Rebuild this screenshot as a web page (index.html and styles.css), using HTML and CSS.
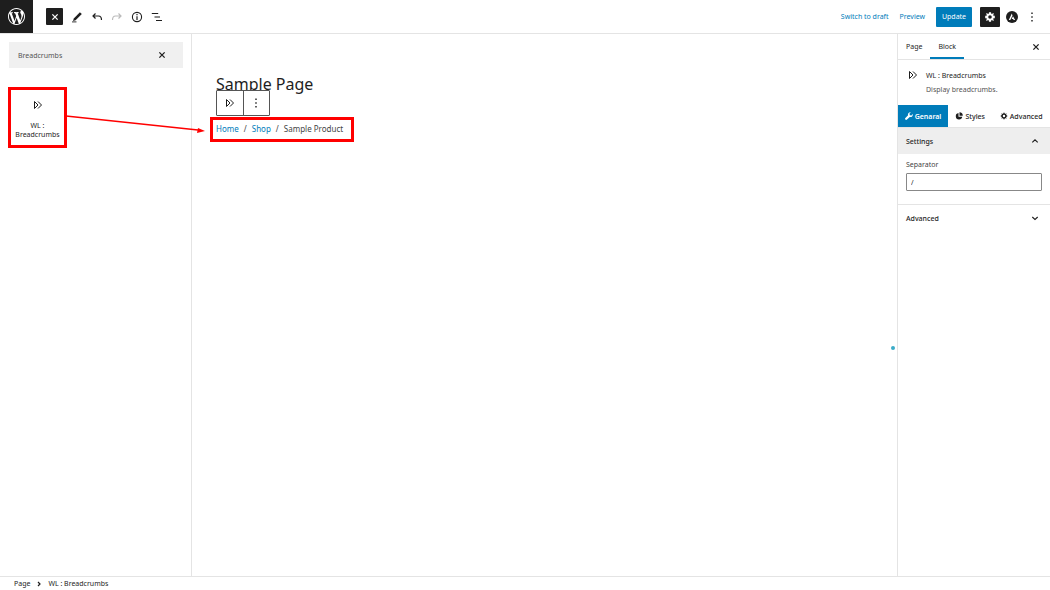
FILE: index.html
```
<!DOCTYPE html>
<html lang="en">
<head>
    <meta charset="UTF-8">
    <meta name="viewport" content="width=device-width, initial-scale=1.0">
    <title>Edit Page</title>
    <link rel="stylesheet" href="styles.css">
</head>
<body>
    <!-- Shared icon shapes -->
    <svg class="sprite" aria-hidden="true">
        <symbol id="icon-close" viewBox="0 0 10 10">
            <path d="M2.8 2.8l4.4 4.4M7.2 2.8L2.8 7.2" fill="none" stroke="currentColor" stroke-width="1.1"/>
        </symbol>
        <symbol id="icon-breadcrumbs" viewBox="0 0 12 12">
            <path d="M2.5 2.5v7L6 6zM6 2.500L9.500 6 6 9.500" fill="none" stroke="currentColor" stroke-width="1"/>
        </symbol>
        <symbol id="icon-dots" viewBox="0 0 10 10">
            <path d="M4.3 .6h1.4V2H4.3zM4.3 4.3h1.4v1.4H4.3zM4.3 8h1.4v1.4H4.3z" fill="currentColor"/>
        </symbol>
        <symbol id="icon-gear" viewBox="0 0 20 20">
            <path d="M18 12h-2.2a6 6 0 0 1-.7 1.6l1.6 1.6-1.6 1.6-1.6-1.6a6 6 0 0 1-1.7.7V18H8.200v-2.100a6 6 0 0 1-1.700-.7l-1.600 1.600-1.600-1.600 1.600-1.600A6 6 0 0 1 4.200 12H2V8h2.200a6 6 0 0 1 .7-1.600L3.300 4.800l1.600-1.600 1.600 1.600a6 6 0 0 1 1.700-.7V2h3.600v2.100a6 6 0 0 1 1.700.7l1.600-1.600 1.600 1.600-1.600 1.600a6 6 0 0 1 .7 1.600H18zM10 13a3 3 0 1 0 0-6 3 3 0 0 0 0 6z" fill="currentColor" fill-rule="evenodd"/>
        </symbol>
    </svg>

    <div class="editor">
        <header class="topbar">
            <a href="#" class="wp-logo" aria-label="WordPress">
                <svg viewBox="0 0 20 20"><path fill="currentColor" d="M20 10c0-5.510-4.490-10-10-10C4.480 0 0 4.490 0 10c0 5.520 4.480 10 10 10 5.510 0 10-4.480 10-10zM7.780 15.370L4.370 6.220c.55-.02 1.170-.08 1.170-.08.5-.06.44-1.130-.06-1.110 0 0-1.450.11-2.370.11-.18 0-.37 0-.58-.01C4.120 2.690 6.870 1.110 10 1.110c2.330 0 4.450.87 6.050 2.340-.68-.11-1.650.39-1.650 1.580 0 .74.45 1.360.9 2.100.35.61.55 1.360.55 2.460 0 1.490-1.400 5-1.400 5l-3.030-8.370c.54-.02.82-.17.82-.17.5-.05.44-1.250-.06-1.220 0 0-1.440.12-2.380.12-.87 0-2.330-.12-2.330-.12-.5-.03-.56 1.200-.06 1.220l.92.08 1.260 3.410zM17.410 10c.24-.64.74-1.870.43-4.250.7 1.290 1.050 2.710 1.050 4.250 0 3.290-1.730 6.240-4.400 7.780.97-2.590 1.940-5.200 2.920-7.780zM6.100 18.090C3.120 16.650 1.110 13.530 1.110 10c0-1.300.23-2.480.72-3.590C3.250 10.300 4.670 14.200 6.100 18.090zm4.030-6.630l2.580 6.980c-.86.29-1.760.45-2.710.45-.79 0-1.570-.11-2.290-.33.81-2.380 1.620-4.740 2.420-7.100z"/></svg>
            </a>
            <div class="tools">
                <button class="btn-dark" aria-label="Close inserter"><svg class="icon"><use href="#icon-close"/></svg></button>
                <button class="tool" aria-label="Tools"><svg class="icon" viewBox="0 0 12 12"><path d="M2.800 7.400L8.900 1.200l1.900 1.900-6.200 6.100-2.600.7z" fill="currentColor"/><path d="M1 10.900h4.500" stroke="currentColor" stroke-width=".9"/></svg></button>
                <button class="tool" aria-label="Undo"><svg class="icon" viewBox="0 0 12 12"><path d="M4.500 2.500L2 5l2.500 2.500M2 5h5.500q3 0 3 4" fill="none" stroke="currentColor" stroke-width="1.200"/></svg></button>
                <button class="tool" aria-label="Redo" disabled><svg class="icon" viewBox="0 0 12 12"><path d="M7.500 2.500L10 5 7.500 7.500M10 5H4.500q-3 0-3 4" fill="none" stroke="currentColor" stroke-width="1.200"/></svg></button>
                <button class="tool" aria-label="Details"><svg class="icon" viewBox="0 0 12 12"><circle cx="6" cy="6" r="4.600" fill="none" stroke="currentColor" stroke-width="1.100"/><path d="M5.400 3h1.200v1.300H5.400zM5.400 5.300h1.200V9H5.400z" fill="currentColor"/></svg></button>
                <button class="tool" aria-label="List view"><svg class="icon" viewBox="0 0 12 12"><path d="M.8 2.500h6.400M3.500 6H9M5 9.500h6" stroke="currentColor" stroke-width="1.200"/></svg></button>
            </div>
            <div class="actions">
                <a href="#">Switch to draft</a>
                <a href="#">Preview</a>
                <button class="btn-update">Update</button>
                <button class="btn-dark btn-settings" aria-label="Settings"><svg class="icon"><use href="#icon-gear"/></svg></button>
                <button class="tool" aria-label="Astra settings"><svg class="icon" viewBox="0 0 12 12"><circle cx="6" cy="6" r="6" fill="currentColor"/><path d="M5.800 2.400L2.800 9h1.500l2.200-4.600zM7 5.200L5.700 8h1.400l.5 1h1.500z" fill="#fff"/></svg></button>
                <button class="tool" aria-label="Options"><svg><use href="#icon-dots"/></svg></button>
            </div>
        </header>

        <div class="workspace">
            <aside class="inserter">
                <div class="search">
                    <input type="text" value="Breadcrumbs" aria-label="Search for blocks">
                    <button class="tool" aria-label="Clear search"><svg class="icon"><use href="#icon-close"/></svg></button>
                </div>
                <button class="block-item">
                    <svg class="icon"><use href="#icon-breadcrumbs"/></svg>
                    <span>WL : Breadcrumbs</span>
                </button>
                <svg class="arrow" viewBox="0 0 140 20" aria-hidden="true">
                    <path d="M0 3L132 17" stroke="#f00" stroke-width="1.500"/>
                    <path d="M139 18l-8 2 1-5z" fill="#f00"/>
                </svg>
            </aside>

            <main class="canvas">
                <h1>Sample Page</h1>
                <div class="block-toolbar">
                    <button aria-label="Breadcrumbs"><svg class="icon"><use href="#icon-breadcrumbs"/></svg></button>
                    <button aria-label="Options"><svg><use href="#icon-dots"/></svg></button>
                </div>
                <nav class="breadcrumbs">
                    <a href="#">Home</a>
                    <span>/</span>
                    <a href="#">Shop</a>
                    <span>/</span>
                    <span>Sample Product</span>
                </nav>
                <span class="resize-dot"></span>
            </main>

            <aside class="settings">
                <div class="tabs">
                    <button>Page</button>
                    <button class="active">Block</button>
                    <button class="tool close" aria-label="Close settings"><svg class="icon"><use href="#icon-close"/></svg></button>
                </div>
                <div class="block-card">
                    <svg class="icon"><use href="#icon-breadcrumbs"/></svg>
                    <div>
                        <h2>WL : Breadcrumbs</h2>
                        <p>Display breadcrumbs.</p>
                    </div>
                </div>
                <div class="panel-tabs">
                    <button class="active"><svg viewBox="0 0 16 16"><path d="M15.500 4.200L12.800 7 9.500 6.500 9 3.200 11.800.5A4.600 4.600 0 0 0 6.200 6.500L.8 12a2 2 0 0 0 3.200 3.200l5.500-5.400a4.600 4.600 0 0 0 6-5.600z" fill="currentColor"/></svg>Genaral</button>
                    <button><svg viewBox="0 0 16 16"><path d="M7 2a6.500 6.500 0 1 0 7.500 7.500H7z" fill="currentColor"/><path d="M9 .5V7.500h6.500A6.800 6.800 0 0 0 9 .5z" fill="currentColor"/></svg>Styles</button>
                    <button><svg><use href="#icon-gear"/></svg>Advanced</button>
                </div>
                <button class="panel-title open">Settings<svg viewBox="0 0 10 10"><path d="M2.300 6.300L5 3.800l2.700 2.500" fill="none" stroke="currentColor" stroke-width="1.100"/></svg></button>
                <div class="field">
                    <label for="separator">Separator</label>
                    <input type="text" id="separator" value="/">
                </div>
                <button class="panel-title">Advanced<svg viewBox="0 0 10 10"><path d="M2.300 4L5 6.500 7.700 4" fill="none" stroke="currentColor" stroke-width="1.100"/></svg></button>
            </aside>
        </div>

        <footer class="statusbar">
            <span>Page</span>
            <svg viewBox="0 0 10 10"><path d="M4 3l2 2-2 2" fill="none" stroke="currentColor" stroke-width="1.200"/></svg>
            <span>WL : Breadcrumbs</span>
        </footer>
    </div>
</body>
</html>
```
FILE: styles.css
```
:root {
    --primary: #007cba;
    --dark: #1e1e1e;
    --border: #e4e4e4;
    --mark: #ff0000;
}

* {
    box-sizing: border-box;
}

body {
    margin: 0;
    font-family: "Noto Sans", "Open Sans", sans-serif;
    font-size: 7px;
    line-height: 9px;
    color: var(--dark);
    background: white;
}

button, input {
    font: inherit;
    color: inherit;
    margin: 0;
    padding: 0;
    border: none;
    background: none;
}

button {
    cursor: pointer;
}

a {
    color: var(--primary);
    text-decoration: none;
}

svg {
    display: block;
    flex: none;
    width: 10px;
    height: 10px;
}

.sprite {
    display: none;
}

.icon {
    width: 12px;
    height: 12px;
}

.editor {
    display: flex;
    flex-direction: column;
    min-height: 100vh;
}

/* Top bar */
.topbar {
    display: flex;
    align-items: center;
    height: 34px;
    border-bottom: 1px solid var(--border);
}

.wp-logo {
    display: flex;
    align-items: center;
    justify-content: center;
    width: 33px;
    height: 33px;
    background: var(--dark);
    color: white;
}

.wp-logo svg {
    width: 17px;
    height: 17px;
}

.tools {
    display: flex;
    align-items: center;
    gap: 8px;
    margin-left: 13px;
}

.tool, .btn-dark {
    display: flex;
    align-items: center;
    justify-content: center;
    flex: none;
}

.tool:disabled {
    color: #bbbbbb;
}

.btn-dark {
    width: 17px;
    height: 17px;
    background: var(--dark);
    color: white;
    border-radius: 1px;
}

.actions {
    display: flex;
    align-items: center;
    margin-left: auto;
    margin-right: 13px;
    gap: 8px;
}

.actions .tool {
    margin-left: -2px;
}

.actions a {
    margin-right: 3px;
}

.btn-update {
    width: 36px;
    height: 20px;
    background: var(--primary);
    color: white;
    border-radius: 1px;
}

.btn-settings {
    width: 20px;
    height: 20px;
}

.actions .tool:last-child {
    margin-left: 1px;
}

/* Inserter */
.workspace {
    display: flex;
    flex: 1;
}

.inserter {
    position: relative;
    width: 192px;
    padding: 8px;
    border-right: 1px solid var(--border);
}

.search {
    display: flex;
    align-items: center;
    height: 26px;
    margin-left: 1px;
    padding: 0 15px 0 9px;
    background: #f0f0f0;
}

.search input {
    flex: 1;
    min-width: 0;
    color: #555555;
}

.block-item {
    display: flex;
    flex-direction: column;
    align-items: center;
    justify-content: center;
    gap: 10px;
    width: 59px;
    height: 61px;
    margin-top: 19px;
    padding-top: 2px;
    border: 3px solid var(--mark);
}

.arrow {
    position: absolute;
    top: 79px;
    left: 66px;
    width: 140px;
    height: 20px;
    z-index: 1;
}

/* Canvas */
.canvas {
    position: relative;
    flex: 1;
    padding: 40px 24px;
}

.canvas h1 {
    margin: 0;
    font-size: 16px;
    line-height: 20px;
    font-weight: 400;
}

.block-toolbar {
    position: absolute;
    top: 56px;
    left: 24px;
    display: flex;
    width: 54px;
    height: 26px;
    border: 1px solid #555555;
    border-radius: 1px;
    background: white;
}

.block-toolbar button {
    display: flex;
    flex: 1;
    align-items: center;
    justify-content: center;
}

.block-toolbar button + button {
    border-left: 1px solid #555555;
}

.breadcrumbs {
    display: flex;
    align-items: center;
    gap: 5px;
    width: fit-content;
    height: 25px;
    margin: 23px 0 0 -6px;
    padding: 0 8px 3px 3px;
    border: 3px solid var(--mark);
    font-size: 8px;
    color: #444444;
}

.resize-dot {
    position: absolute;
    top: 312px;
    right: 2px;
    width: 4px;
    height: 4px;
    border-radius: 50%;
    background: #3bacc8;
}

/* Settings sidebar */
.settings {
    width: 153px;
    border-left: 1px solid var(--border);
}

.tabs {
    display: flex;
    height: 26px;
    border-bottom: 1px solid var(--border);
}

.tabs button {
    padding: 0 8px;
}

.tabs .active {
    border-top: 2px solid transparent;
    border-bottom: 2px solid var(--primary);
}

.tabs .close {
    margin-left: auto;
}

.block-card {
    display: flex;
    gap: 7px;
    height: 45px;
    padding: 9px;
}

.block-card h2, .block-card p {
    margin: 0;
    font-size: 7px;
    line-height: 14px;
    font-weight: 400;
}

.block-card p {
    color: #555555;
}

.panel-tabs {
    display: flex;
    height: 22px;
}

.panel-tabs button {
    display: flex;
    flex: 1 0 auto;
    align-items: center;
    justify-content: center;
    gap: 2px;
    font-weight: 500;
}

.panel-tabs svg {
    width: 8px;
    height: 8px;
}

.panel-tabs .active {
    flex: none;
    width: 50px;
    background: var(--primary);
    color: white;
    font-weight: 600;
}

.panel-title {
    display: flex;
    align-items: center;
    justify-content: space-between;
    width: 100%;
    height: 27px;
    padding: 0 10px 0 8px;
    border-top: 1px solid var(--border);
    font-weight: 500;
}

.panel-title.open {
    background: #eeeeee;
}

.field {
    padding: 6px 8px 13px;
}

.field label {
    display: block;
    margin-bottom: 4px;
    color: #444444;
}

.field input {
    display: block;
    width: 100%;
    height: 18px;
    padding: 0 4px;
    border: 1px solid #888888;
    border-radius: 1px;
}

/* Footer */
.statusbar {
    display: flex;
    align-items: center;
    gap: 4px;
    height: 14px;
    padding: 0 14px;
    border-top: 1px solid var(--border);
}
```
